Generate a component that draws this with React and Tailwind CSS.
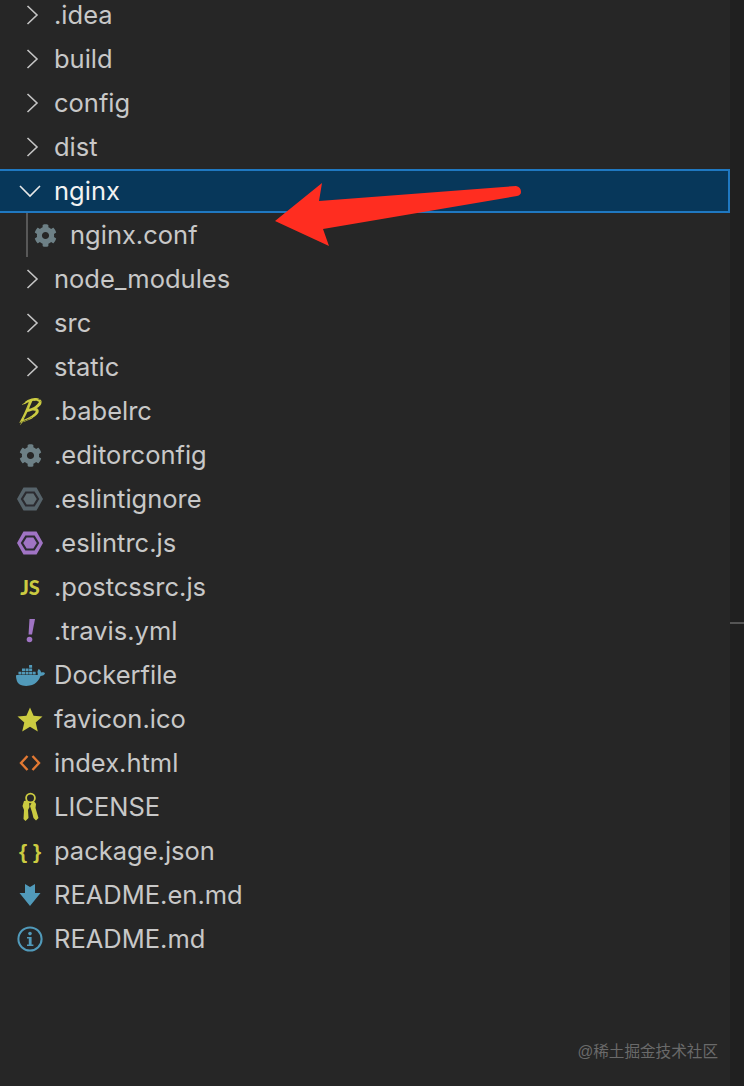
import { FaCog } from 'react-icons/fa';
import { SiBabel, SiDocker } from 'react-icons/si';

const Chevron = () => (
  <svg width="32" height="24" viewBox="0 0 32 24" fill="none" stroke="#c5c5c5" strokeWidth="1.6">
    <path d="M13.5 3 L23 12 L13.5 21" />
  </svg>
);

const ChevronDown = () => (
  <svg width="32" height="24" viewBox="0 0 32 24" fill="none" stroke="#e8e8e8" strokeWidth="1.6">
    <path d="M6 7 L16 17 L26 7" />
  </svg>
);

const Gear = () => <FaCog size={23} color="#6d8086" />;

const HexLint = ({ outer, inner }) => (
  <svg width="28" height="26" viewBox="0 0 28 26">
    <path d="M7.5 1.5 H20.5 L27 13 L20.5 24.5 H7.5 L1 13 Z" fill={outer} />
    <path d="M10 6.5 H18 L22 13 L18 19.5 H10 L6 13 Z" fill={inner} stroke="#2b2b30" strokeWidth="2.2" />
  </svg>
);

const JsIcon = () => (
  <span className="text-[20px] leading-none font-black text-[#cbcb41] font-['Lato',sans-serif]">JS</span>
);

const Bang = () => (
  <svg width="16" height="26" viewBox="0 0 16 26" fill="#a074c4">
    <path d="M7.5 1 H13 L10 16.5 H6.5 Z" />
    <circle cx="7.5" cy="21.5" r="2.8" />
  </svg>
);

const Star = () => (
  <svg width="26" height="25" viewBox="0 0 26 25" fill="#cbcb41">
    <path d="M13 0.5 L16.6 8.8 L25.5 9.6 L18.7 15.5 L20.8 24.5 L13 19.7 L5.2 24.5 L7.3 15.5 L0.5 9.6 L9.4 8.8 Z" />
  </svg>
);

const Code = () => (
  <svg width="22" height="18" viewBox="0 0 22 18" fill="none" stroke="#e37933" strokeWidth="2.4">
    <path d="M8.5 2 L2 9 L8.5 16" />
    <path d="M13.5 2 L20 9 L13.5 16" />
  </svg>
);

// two keys hanging from one ring
const Keys = () => (
  <svg width="18" height="30" viewBox="0 0 18 30" fill="#cbcb41">
    <circle cx="9.5" cy="6" r="4.4" fill="none" stroke="#cbcb41" strokeWidth="1.8" />
    <path d="M3 9 Q6 7.5 8 10 L8.5 15 L7 18 L7.5 26 L4.5 29 L2.5 27 L3 18 L1.5 14 Z" />
    <path d="M9 14 L11 10 Q14 9 15 12 L14.5 16 L17.5 26 L15 28.5 L12.5 26 L11 20 Z" />
  </svg>
);

const Braces = () => (
  <span className="text-[21px] leading-none font-bold whitespace-pre text-[#cbcb41] font-['Liberation_Sans',sans-serif]">{'{ }'}</span>
);

const DownArrow = () => (
  <svg width="22" height="24" viewBox="0 0 22 24" fill="#519aba">
    <path d="M6 1 L11 4 L16 1 V10 H21.5 L11 23 L0.5 10 H6 Z" />
  </svg>
);

const Info = () => (
  <svg width="26" height="26" viewBox="0 0 26 26" fill="none">
    <circle cx="13" cy="13" r="11.6" stroke="#519aba" strokeWidth="2" />
    <circle cx="13" cy="7.6" r="1.8" fill="#519aba" />
    <path d="M10 11 H14.6 V18.4 H16.4 V20 H10 V18.4 H11.8 V12.6 H10 Z" fill="#519aba" />
  </svg>
);

const rows = [
  { name: '.idea', icon: <Chevron /> },
  { name: 'build', icon: <Chevron /> },
  { name: 'config', icon: <Chevron /> },
  { name: 'dist', icon: <Chevron /> },
  { name: 'nginx', icon: <ChevronDown />, selected: true },
  { name: 'nginx.conf', icon: <Gear />, nested: true },
  { name: 'node_modules', icon: <Chevron /> },
  { name: 'src', icon: <Chevron /> },
  { name: 'static', icon: <Chevron /> },
  { name: '.babelrc', icon: <SiBabel size={27} color="#cbcb41" /> },
  { name: '.editorconfig', icon: <Gear /> },
  { name: '.eslintignore', icon: <HexLint outer="#56636a" inner="#5f6c72" /> },
  { name: '.eslintrc.js', icon: <HexLint outer="#a074c4" inner="#a074c4" /> },
  { name: '.postcssrc.js', icon: <JsIcon /> },
  { name: '.travis.yml', icon: <Bang /> },
  { name: 'Dockerfile', icon: <SiDocker size={29} color="#519aba" /> },
  { name: 'favicon.ico', icon: <Star /> },
  { name: 'index.html', icon: <Code /> },
  { name: 'LICENSE', icon: <Keys /> },
  { name: 'package.json', icon: <Braces /> },
  { name: 'README.en.md', icon: <DownArrow /> },
  { name: 'README.md', icon: <Info /> },
];

const TreeRow = ({ row }) => {
  if (row.selected) {
    return (
      <div className="flex h-[44px] items-center border-y-2 border-r-2 border-[#1f78c1] bg-[#07375a] pl-[14px]">
        <div className="flex w-[32px] justify-center">{row.icon}</div>
        <span className="ml-[8px] pt-[1px] text-[#f2f2f2]">{row.name}</span>
      </div>
    );
  }
  if (row.nested) {
    return (
      <div className="flex h-[44px] items-center pl-[26px]">
        <div className="flex h-full items-center border-l-2 border-[#585858] pl-[1px]">
          <div className="flex w-[32px] justify-center">{row.icon}</div>
          <span className="ml-[9px] pt-[1px]">{row.name}</span>
        </div>
      </div>
    );
  }
  return (
    <div className="flex h-[44px] items-center pl-[14px]">
      <div className="flex w-[32px] justify-center">{row.icon}</div>
      <span className="ml-[8px] pt-[1px]">{row.name}</span>
    </div>
  );
};

export default function App() {
  return (
    <div className="relative flex h-[1086px] w-[744px] overflow-hidden bg-[#262626] font-['Inter',sans-serif] text-[25.5px] text-[#c8c8c8]">
      <div className="-mt-[7px] w-[730px]">
        {rows.map((row) => (
          <TreeRow key={row.name} row={row} />
        ))}
      </div>
      <div className="flex-1 bg-[#202020] pt-[622px]">
        <div className="h-[2px] bg-[#555555]" />
      </div>

      {/* annotation arrow drawn over the tree */}
      <svg className="absolute left-[270px] top-[178px]" width="256" height="72" viewBox="0 0 256 72" fill="#ff2d20">
        <path d="M5 43 L52 5 L49 23 L246 8 Q251 9 251 14 Q251 17 247 18 L53 51 L59 68 Z" />
      </svg>

      <div className="absolute right-[26px] top-[1042px] text-[15.6px] leading-[20px] text-[#6a6a6a] font-['Liberation_Sans','Noto_Sans_CJK_SC',sans-serif]">
        @稀土掘金技术社区
      </div>
    </div>
  );
}
